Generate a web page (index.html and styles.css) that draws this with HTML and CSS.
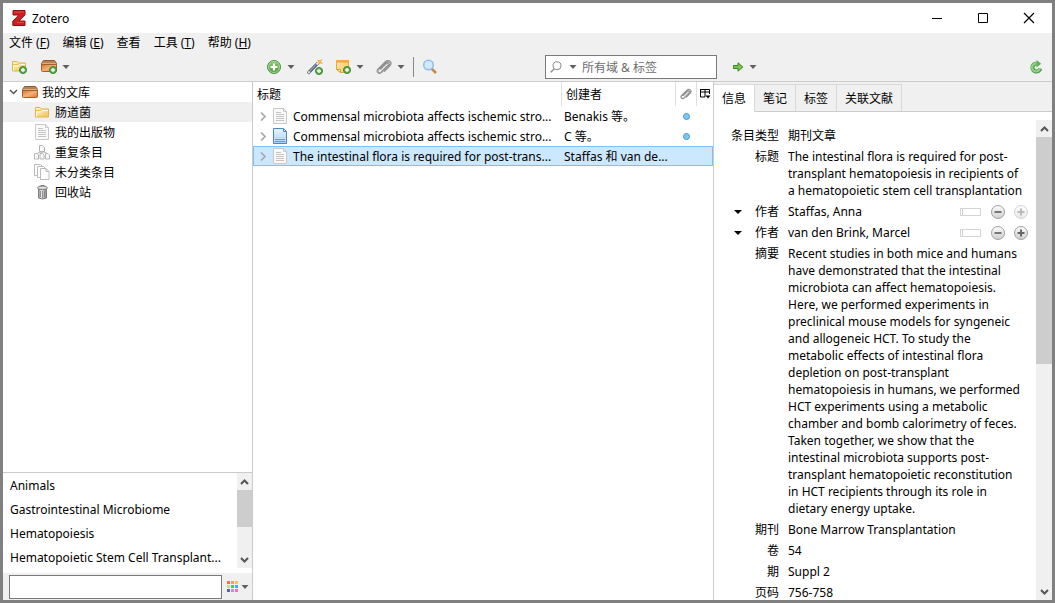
FILE: index.html
```html
<!DOCTYPE html>
<html lang="zh-CN">
<head>
<meta charset="utf-8">
<title>Zotero</title>
<link rel="stylesheet" href="styles.css">
</head>
<body>
<svg class="defs" aria-hidden="true">
  <defs>
    <linearGradient id="gFolder" x1="0" y1="0" x2="1" y2="1"><stop offset="0" stop-color="#fff6c8"/><stop offset="1" stop-color="#f3c350"/></linearGradient>
    <linearGradient id="gNote" x1="0" y1="0" x2="1" y2="1"><stop offset="0" stop-color="#ffe9a8"/><stop offset="1" stop-color="#fbc95a"/></linearGradient>
    <linearGradient id="gBox" x1="0" y1="0" x2="1" y2="1"><stop offset="0" stop-color="#d07a34"/><stop offset=".5" stop-color="#f4b27a"/><stop offset="1" stop-color="#d8742c"/></linearGradient>
    <linearGradient id="gGreen" x1="0" y1="0" x2="0" y2="1"><stop offset="0" stop-color="#8ccc78"/><stop offset="1" stop-color="#4a9a3a"/></linearGradient>
    <linearGradient id="gGray" x1="0" y1="0" x2="0" y2="1"><stop offset="0" stop-color="#fdfdfd"/><stop offset="1" stop-color="#cfcfcf"/></linearGradient>
    <linearGradient id="gBlue" x1="0" y1="0" x2="0" y2="1"><stop offset="0" stop-color="#eaf4ff"/><stop offset="1" stop-color="#a9d0fa"/></linearGradient>
    <linearGradient id="gTrash" x1="0" y1="0" x2="1" y2="0"><stop offset="0" stop-color="#8c8c8c"/><stop offset=".35" stop-color="#e8e8e8"/><stop offset="1" stop-color="#858585"/></linearGradient>
    <symbol id="plusBadge" viewBox="0 0 8 8"><circle cx="4" cy="4" r="3.500" fill="#63ad50" stroke="#3b842f"/><path d="M4 2v4M2 4h4" stroke="#fff" stroke-width="1.300"/></symbol>
    <symbol id="folder" viewBox="0 0 16 16"><path d="M1.500 13V3.500H6L7.500 5h7v8z" fill="url(#gFolder)" stroke="#dfb44c"/><path d="M2.500 12.500V8H7l1-1.500h6" fill="none" stroke="#fffbe6"/><path d="M2 6.500h5l1-1" fill="none" stroke="#e8bf58"/></symbol>
    <symbol id="box" viewBox="0 0 16 16"><path d="M2.500 2.500h11l2 3v1.500H.5V5.500z" fill="#b98253" stroke="#8a5a30"/><path d="M1 5.500h14" stroke="#dcae84"/><path d="M.5 6.500h15v6q0 1-1 1h-13q-1 0-1-1z" fill="url(#gBox)" stroke="#a3602a"/></symbol>
    <symbol id="page" viewBox="0 0 16 16"><path d="M1.500.5h10l3 3v12h-13z" fill="#fafafa" stroke="#c8c8c8"/><path d="M11.500.5v3h3" fill="none" stroke="#c8c8c8"/><path d="M4 4.500h5M4 6.500h8M4 8.500h8M4 10.500h8M4 12.500h8" stroke="#c4c4c4"/></symbol>
    <symbol id="bluepage" viewBox="0 0 16 16"><path d="M1.500.5h10l3 3v12h-13z" fill="url(#gBlue)" stroke="#4b86c6"/><path d="M11.500.5v3h3" fill="none" stroke="#4b86c6"/><path d="M3 11.500h10M3 13.500h10" stroke="#5ea0e6"/></symbol>
    <symbol id="clip" viewBox="0 0 16 16"><path d="M4 10.500l6-6q1.500-1.200 2.300 0t-.3 2.200l-6.500 6.500q-2 1.600-3.400.2t.2-3.400L9.500 2.800q2.200-1.900 4.200-.3t.2 4L8 12.500" fill="none" stroke="#7d7d7d" stroke-width="1.700"/><path d="M4 10.500l6-6q1.500-1.200 2.300 0t-.3 2.200l-6.500 6.500q-2 1.600-3.400.2t.2-3.400L9.500 2.800q2.200-1.900 4.200-.3t.2 4L8 12.500" fill="none" stroke="#c9c9c9" stroke-width=".6"/></symbol>
    <symbol id="minus" viewBox="0 0 16 16"><circle cx="8" cy="8" r="6.500" fill="url(#gGray)" stroke="#a0a0a0"/><path d="M4.500 8h7" stroke="#777" stroke-width="2"/></symbol>
    <symbol id="plus" viewBox="0 0 16 16"><circle cx="8" cy="8" r="6.500" fill="url(#gGray)" stroke="#a0a0a0"/><path d="M4.500 8h7M8 4.500v7" stroke="#666" stroke-width="2"/></symbol>
    <symbol id="drop" viewBox="0 0 8 4"><path d="M.5 0h7L4 4z" fill="#606060"/></symbol>
    <symbol id="up" viewBox="0 0 9 6"><path d="M1 5l3.500-3.500L8 5" fill="none" stroke="#555" stroke-width="2"/></symbol>
    <symbol id="down" viewBox="0 0 9 6"><path d="M1 1l3.500 3.500L8 1" fill="none" stroke="#555" stroke-width="2"/></symbol>
    <symbol id="right" viewBox="0 0 6 9"><path d="M1 .5l4 4-4 4" fill="none" stroke="#a8a8a8" stroke-width="1.600"/></symbol>
  </defs>
</svg>

<div class="window">
  <header class="titlebar">
    <svg class="logo" viewBox="0 0 14 16"><path d="M1 .5h12v4.300L7 11h6v4.500H.8v-4.300L6.800 5H1z" fill="#cc2020" stroke="#8d1013"/><path d="M2 2h10M5 12.500h7" stroke="#e34b45"/></svg>
    <h1 class="title">Zotero</h1>
    <div class="controls">
      <button class="control" aria-label="最小化"><svg class="i12" viewBox="0 0 12 12"><path d="M1 6.500h10" stroke="#000"/></svg></button>
      <button class="control" aria-label="最大化"><svg class="i12" viewBox="0 0 12 12"><path d="M1.500 1.500h9v9h-9z" fill="none" stroke="#000"/></svg></button>
      <button class="control" aria-label="关闭"><svg class="i12" viewBox="0 0 12 12"><path d="M1 1l10 10M11 1L1 11" stroke="#000" stroke-width="1.200"/></svg></button>
    </div>
  </header>

  <nav class="menubar">
    <button class="menu">文件 (<u>F</u>)</button>
    <button class="menu">编辑 (<u>E</u>)</button>
    <button class="menu">查看</button>
    <button class="menu">工具 (<u>T</u>)</button>
    <button class="menu">帮助 (<u>H</u>)</button>
  </nav>

  <div class="toolbar columns">
    <div class="tools tools-left">
      <button class="tool" aria-label="新建分类"><svg class="i16" viewBox="0 0 16 16"><use href="#folder" y="-1" width="16" height="16"/><use href="#plusBadge" x="8" y="7" width="8" height="8"/></svg></button>
      <button class="tool" aria-label="新建文库"><svg class="i16" viewBox="0 0 16 16"><use href="#box" y="-1" width="16" height="16"/><use href="#plusBadge" x="8" y="7" width="8" height="8"/></svg><svg class="drop"><use href="#drop"/></svg></button>
    </div>
    <div class="tools tools-mid">
      <button class="tool" aria-label="新建条目"><svg class="i16" viewBox="0 0 16 16"><circle cx="8" cy="8" r="6.500" fill="url(#gGreen)" stroke="#4b9340"/><circle cx="8" cy="8" r="5.500" fill="none" stroke="#a5d998"/><path d="M8 4.500v7M4.500 8h7" stroke="#fff" stroke-width="2.200"/></svg><svg class="drop"><use href="#drop"/></svg></button>
      <button class="tool" aria-label="通过标识符添加条目"><svg class="i16" viewBox="0 0 16 16"><path d="M.8 14.500L11 4" stroke="#4c5664" stroke-width="3.200"/><path d="M3 12l6-6.300" stroke="#8fa3bb" stroke-width="1.200"/><path d="M1.200 14l1.600-1.600M9.500 5.500L11 4" stroke="#e6ebf2" stroke-width="2"/><path d="M10 1l3 .3L15.500 0 14 2.700l2 2.300-3-.7L11.500 6.500 12 3.500z" fill="#f7a325"/><path d="M12 2.500l2-1-.8 1.800z" fill="#ffe27a"/><use href="#plusBadge" x="8" y="8" width="8" height="8"/></svg></button>
      <button class="tool" aria-label="新建笔记"><svg class="i16" viewBox="0 0 16 16"><path d="M1.500 1.500h12v12h-8l-4-3z" fill="url(#gNote)" stroke="#e8aa45"/><path d="M1 2.500h13" stroke="#f2ab45" stroke-width="2.500"/><path d="M1.500 10.500h4v3z" fill="#fff8de" stroke="#d8a33f"/><use href="#plusBadge" x="8" y="7" width="8" height="8"/></svg><svg class="drop"><use href="#drop"/></svg></button>
      <button class="tool" aria-label="添加附件"><svg class="i16"><use href="#clip"/></svg><svg class="drop"><use href="#drop"/></svg></button>
      <span class="separator"></span>
      <button class="tool" aria-label="高级搜索"><svg class="i16" viewBox="0 0 16 16"><path d="M9.500 9.500l4.500 4.500" stroke="#c98a3c" stroke-width="2.500"/><circle cx="6.500" cy="6" r="4.800" fill="#d3e8fd" stroke="#8fbdf0" stroke-width="1.500"/></svg></button>
      <label class="search">
        <svg class="i12" viewBox="0 0 12 12"><circle cx="7" cy="4.800" r="4" fill="none" stroke="#8a8a8a"/><path d="M4 8L.8 11.200" stroke="#8a8a8a" stroke-width="1.300"/></svg>
        <svg class="drop"><use href="#drop"/></svg>
        <input class="search-input" type="text" aria-label="搜索" placeholder="所有域 &amp; 标签">
      </label>
    </div>
    <div class="tools tools-right">
      <button class="tool" aria-label="定位"><svg class="i12" viewBox="0 0 12 12"><path d="M1.500 4.500H6V1.800L10.800 6 6 10.200V7.500H1.500z" fill="#7fc44f" stroke="#35871f"/></svg><svg class="drop"><use href="#drop"/></svg></button>
      <button class="tool sync" aria-label="同步"><svg class="i14" viewBox="0 0 14 14"><path d="M7.500 3.500a4 4 0 1 0 3.800 5" fill="none" stroke="#4c9a45" stroke-width="4"/><path d="M7.500 3.500a4 4 0 1 0 3.500 4.600" fill="none" stroke="#94d08b" stroke-width="2.200"/><path d="M7.500 0l4.700 3.700L7.500 7.500z" fill="#5fae55"/></svg></button>
    </div>
  </div>

  <main class="workspace columns">
    <aside class="sidebar">
      <ul class="tree">
        <li class="node root"><svg class="twisty" viewBox="0 0 9 6"><path d="M1 1l3.500 3.500L8 1" fill="none" stroke="#555" stroke-width="1.500"/></svg><svg class="i16"><use href="#box"/></svg>我的文库</li>
        <li class="node active"><svg class="i16"><use href="#folder"/></svg>肠道菌</li>
        <li class="node"><svg class="i16"><use href="#page"/></svg>我的出版物</li>
        <li class="node"><svg class="i16" viewBox="0 0 16 16"><g fill="#fafafa" stroke="#b4b4b4"><path d="M5.500 1.500h3l2 2v4h-5zM.5 9.500h2.500l1.500 1.500v4h-4zM6 9.500h2.500l1.500 1.500v4H6zM11.500 9.500h2.500l1.500 1.500v4h-4z"/></g><path d="M8 7.500v2M3 9.500l3-1.500h4l3 1.500" fill="none" stroke="#b4b4b4"/></svg>重复条目</li>
        <li class="node"><svg class="i16" viewBox="0 0 16 16"><g fill="#fff" stroke="#bbb"><path d="M.5.5h6l2 2v9h-8z"/><path d="M3.500 2.500h6l2 2v9h-8z"/><path d="M6.500 4.500h5.500l3 3v8H6.500z"/><path d="M12 4.500v3h3" fill="none"/></g></svg>未分类条目</li>
        <li class="node"><svg class="i16" viewBox="0 0 16 16"><path d="M4.500 4v10q4 2 8 0V4z" fill="url(#gTrash)" stroke="#7c7c7c"/><path d="M6.500 7v6M8.500 7v7M10.500 7v6" stroke="#777" stroke-width=".7"/><ellipse cx="8.500" cy="3.800" rx="5" ry="1.800" fill="#dcdcdc" stroke="#7c7c7c"/><path d="M6.500 1.500h4" stroke="#7c7c7c"/></svg>回收站</li>
      </ul>
      <section class="tags">
        <div class="taglist-wrap">
          <ul class="taglist">
            <li class="tag">Animals</li>
            <li class="tag">Gastrointestinal Microbiome</li>
            <li class="tag">Hematopoiesis</li>
            <li class="tag">Hematopoietic Stem Cell Transplant...</li>
          </ul>
          <div class="scrollbar tag-scroll"><svg class="arrow"><use href="#up"/></svg><span class="track"><span class="thumb thumb-tags"></span></span><svg class="arrow"><use href="#down"/></svg></div>
        </div>
        <div class="tagfilter">
          <input class="tag-input" type="text" aria-label="筛选标签">
          <button class="tool" aria-label="标签选项"><svg class="i12" viewBox="0 0 12 12"><path d="M0 0h3v3H0z" fill="#ff6b66"/><path d="M4 0h3v3H4z" fill="#ff9a6b"/><path d="M8 0h3v3H8z" fill="#f2c45c"/><path d="M0 4h3v3H0z" fill="#c4dc92"/><path d="M4 4h3v3H4z" fill="#4fc463"/><path d="M8 4h3v3H8z" fill="#4ba3f5"/><path d="M0 8h3v3H0z" fill="#5867ad"/><path d="M4 8h3v3H4z" fill="#c78de0"/><path d="M8 8h3v3H8z" fill="#f471b5"/></svg><svg class="drop"><use href="#drop"/></svg></button>
        </div>
      </section>
    </aside>

    <section class="items">
      <table class="grid">
        <colgroup><col><col class="c-creator"><col class="c-att"><col class="c-pick"></colgroup>
        <thead>
          <tr><th>标题</th><th>创建者</th><th class="ico"><svg class="i12" viewBox="0 0 16 16"><use href="#clip" width="16" height="16"/></svg></th><th class="ico"><button class="tool" aria-label="选择列"><svg class="i12" viewBox="0 0 12 12"><path d="M1 1.500h9.500V6M1.500 1v8H6M1 4h9.500M6 2v7" fill="none" stroke="#000"/><path d="M6.500 7.500h5L9 10.500z"/></svg></button></th></tr>
        </thead>
        <tbody>
          <tr><td><div class="cell"><svg class="chev"><use href="#right"/></svg><svg class="i16"><use href="#page"/></svg><span class="clip">Commensal microbiota affects ischemic stro...</span></div></td><td class="clip">Benakis 等。</td><td class="ico"><span class="dot"></span></td><td></td></tr>
          <tr><td><div class="cell"><svg class="chev"><use href="#right"/></svg><svg class="i16"><use href="#bluepage"/></svg><span class="clip">Commensal microbiota affects ischemic stro...</span></div></td><td class="clip">C 等。</td><td class="ico"><span class="dot"></span></td><td></td></tr>
          <tr class="selected"><td><div class="cell"><svg class="chev"><use href="#right"/></svg><svg class="i16"><use href="#page"/></svg><span class="clip">The intestinal flora is required for post-trans...</span></div></td><td class="clip">Staffas 和 van de...</td><td></td><td></td></tr>
        </tbody>
      </table>
    </section>

    <section class="details">
      <div class="tabs" role="tablist">
        <button class="tab current" role="tab" aria-selected="true">信息</button>
        <button class="tab" role="tab">笔记</button>
        <button class="tab" role="tab">标签</button>
        <button class="tab" role="tab">关联文献</button>
      </div>
      <div class="panel">
        <dl class="fields">
          <dt>条目类型</dt><dd>期刊文章</dd>
          <dt>标题</dt><dd>The intestinal flora is required for post-<br>transplant hematopoiesis in recipients of<br>a hematopoietic stem cell transplantation</dd>
          <dt><svg class="caret" viewBox="0 0 8 4"><path d="M0 0h8L4 4z"/></svg>作者</dt>
          <dd class="creator">Staffas, Anna<span class="actions"><button class="mode" aria-label="切换姓名栏"></button><button class="tool" aria-label="删除"><svg class="i16"><use href="#minus"/></svg></button><button class="tool" aria-label="添加" disabled><svg class="i16"><use href="#plus"/></svg></button></span></dd>
          <dt><svg class="caret" viewBox="0 0 8 4"><path d="M0 0h8L4 4z"/></svg>作者</dt>
          <dd class="creator">van den Brink, Marcel<span class="actions"><button class="mode" aria-label="切换姓名栏"></button><button class="tool" aria-label="删除"><svg class="i16"><use href="#minus"/></svg></button><button class="tool" aria-label="添加"><svg class="i16"><use href="#plus"/></svg></button></span></dd>
          <dt>摘要</dt><dd>Recent studies in both mice and humans<br>have demonstrated that the intestinal<br>microbiota can affect hematopoiesis.<br>Here, we performed experiments in<br>preclinical mouse models for syngeneic<br>and allogeneic HCT. To study the<br>metabolic effects of intestinal flora<br>depletion on post-transplant<br>hematopoiesis in humans, we performed<br>HCT experiments using a metabolic<br>chamber and bomb calorimetry of feces.<br>Taken together, we show that the<br>intestinal microbiota supports post-<br>transplant hematopoietic reconstitution<br>in HCT recipients through its role in<br>dietary energy uptake.</dd>
          <dt>期刊</dt><dd>Bone Marrow Transplantation</dd>
          <dt>卷</dt><dd>54</dd>
          <dt>期</dt><dd>Suppl 2</dd>
          <dt>页码</dt><dd>756-758</dd>
        </dl>
        <div class="scrollbar"><svg class="arrow"><use href="#up"/></svg><span class="track"><span class="thumb"></span></span><svg class="arrow"><use href="#down"/></svg></div>
      </div>
    </section>
  </main>
</div>
</body>
</html>
```
FILE: styles.css
```css
* { box-sizing: border-box; }

body {
  margin: 0;
  color: #000;
  font: 12px/17px "Noto Sans", "Noto Sans CJK SC", sans-serif;
}

button, input { font: inherit; color: inherit; }
button { padding: 0; border: 0; background: none; }
ul, dl, dd, h1 { margin: 0; padding: 0; }
ul { list-style: none; }
svg { display: block; flex: none; }

.defs { position: absolute; width: 0; height: 0; }
.i16 { width: 16px; height: 16px; }
.i14 { width: 14px; height: 14px; }
.i12 { width: 12px; height: 12px; }
.drop { width: 8px; height: 4px; }

.window {
  display: flex;
  flex-direction: column;
  height: 100vh;
  overflow: hidden;
  border: 3px solid #808080;
  background: #fff;
}

.columns {
  display: grid;
  grid-template-columns: 250px minmax(0, 1fr) 338px;
}

/* Title bar */
.titlebar { display: flex; flex: none; align-items: center; gap: 6px; height: 30px; padding-left: 9px; }
.logo { width: 14px; height: 16px; }
.title { flex: 1; font-size: 12px; font-weight: 400; }
.controls { display: flex; }
.control { display: grid; place-items: center; width: 46px; height: 30px; }

/* Menus */
.menubar { display: flex; flex: none; gap: 13px; height: 20px; padding: 0 6px 1px; background: #f0f0f0; }
.menu { white-space: nowrap; }
.menu u { text-underline-offset: 1px; }

/* Toolbar */
.toolbar { flex: none; height: 29px; border-bottom: 1px solid #ccc; background: #f0f0f0; }
.tools { display: flex; align-items: center; gap: 14px; }
.tools-left { padding-left: 8px; }
.tools-mid { gap: 12px; padding-left: 13px; }
.tools-right { padding: 0 9px 0 18px; }
.tool { display: flex; align-items: center; gap: 5px; }
.tool:disabled { opacity: .45; }
.sync { margin-left: auto; }
.separator { width: 1px; height: 20px; margin: 0 -4px; background: #888; }

.search {
  display: flex;
  align-items: center;
  gap: 7px;
  width: 172px;
  height: 24px;
  margin: 0 -3px 0 auto;
  padding: 0 4px;
  border: 1px solid #7a7a7a;
  background: #fff;
}
.search-input { flex: 1; min-width: 0; margin-left: -2px; padding: 0; border: 0; outline: 0; background: none; }
.search-input::placeholder { color: #6d6d6d; }

.workspace { flex: 1; min-height: 0; }

/* Library tree */
.sidebar { display: flex; flex-direction: column; min-height: 0; border-right: 1px solid #ccc; }
.tree { flex: 1; }
.node { display: flex; align-items: center; gap: 5px; height: 20px; padding-left: 31px; }
.root { gap: 4px; padding-left: 6px; }
.twisty { width: 9px; height: 6px; }
.active { background: #f0f0f0; }

/* Tag selector */
.tags { flex: none; border-top: 1px solid #ccc; }
.taglist-wrap { display: flex; height: 100px; padding-bottom: 5px; }
.taglist { flex: 1; min-width: 0; }
.tag { padding: 4px 0 3px 7px; white-space: nowrap; }
.tagfilter { display: flex; align-items: center; gap: 5px; height: 27px; padding: 0 3px 0 6px; background: #f0f0f0; }
.tag-input { flex: 1; min-width: 0; height: 24px; border: 1px solid #7a7a7a; background: #fff; }
.tagfilter .tool { gap: 2px; }

.scrollbar { display: flex; flex: none; flex-direction: column; align-items: center; width: 16px; background: #f0f0f0; }
.tag-scroll { width: 15px; }
.arrow { width: 9px; height: 6px; margin: 6px 0 5px; }
.track { flex: 1; width: 100%; }
.thumb { display: block; height: 51%; background: #cdcdcd; }
.thumb-tags { height: 60%; }

/* Item list */
.items { min-width: 0; border-right: 1px solid #ccc; }
.grid { width: 100%; border-collapse: separate; border-spacing: 0; table-layout: fixed; }
.c-creator { width: 114px; }
.c-att { width: 21px; }
.c-pick { width: 16px; }
.grid th { height: 24px; padding: 0 4px; font-weight: 400; text-align: left; border-right: 1px solid #e0e0e0; }
.grid th:last-child { border: 0; }
.grid td { height: 20px; padding: 0 4px 0 2px; }
.grid .ico { padding: 0; }
.ico svg, .ico span, .ico button { margin: 0 auto; }
.grid td:first-child { padding: 0 4px 0 7px; }
.cell { display: flex; align-items: center; gap: 5px; }
.chev { width: 6px; height: 9px; margin-right: 1px; }
.clip { white-space: nowrap; }
.dot { display: block; width: 7px; height: 7px; border: 1px solid #3d9bdc; border-radius: 50%; background: #7cc6f3; }
.selected td { background: #cce8ff; border: solid #7abfff; border-width: 1px 0; }
.selected td:first-child { border-left-width: 1px; padding-left: 6px; }
.selected td:last-child { border-right-width: 1px; }

/* Item details */
.details { display: flex; flex-direction: column; min-width: 0; min-height: 0; }
.tabs { display: flex; flex: none; height: 30px; padding-top: 2px; border-bottom: 1px solid #ccc; background: #f0f0f0; }
.tab { height: 27px; padding: 0 8px; border: solid #d9d9d9; border-width: 1px 1px 0 0; }
.current { height: 28px; background: #fff; }
.panel { display: flex; flex: 1; min-height: 0; padding-top: 8px; }
.fields {
  display: grid;
  flex: 1;
  grid-template-columns: 65px minmax(0, 1fr);
  gap: 4px 9px;
  align-content: start;
  min-height: 0;
  overflow: hidden;
  padding: 7px 7px 0 0;
}
.fields dt { display: flex; justify-content: flex-end; white-space: nowrap; }
.fields dd { white-space: nowrap; }
.caret { width: 8px; height: 4px; margin: 7px 13px 0 0; }
.creator { display: flex; justify-content: space-between; }
.actions { display: flex; align-items: center; gap: 7px; }
.mode { width: 21px; height: 8px; margin-right: 2px; border: 1px solid #d4d4d4; background: linear-gradient(90deg, #fff 1px, #ccc 1px 2px, #fff 2px); }
```
